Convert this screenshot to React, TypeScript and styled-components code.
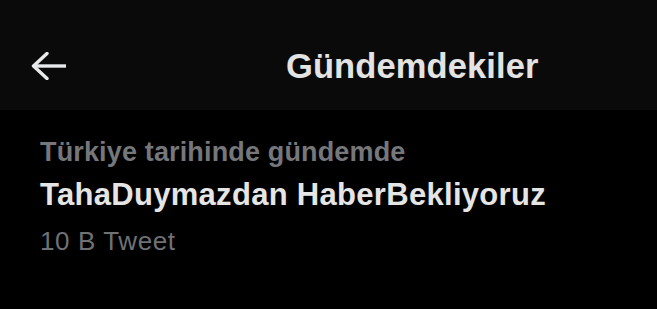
import React from "react";
import styled, { createGlobalStyle } from "styled-components";

const Global = createGlobalStyle`
  html, body { margin: 0; padding: 0; background: #000; }
  body { font-family: "Liberation Sans", Arial, sans-serif; }
  #root { width: 657px; height: 309px; background: #000; overflow: hidden; }
`;

const Header = styled.header`
  height: 110px;
  box-sizing: border-box;
  padding: 46px 0 0 31px;
  background: #0a0a0a;
  display: flex;
  align-items: flex-start;
`;

const BackButton = styled.div`
  width: 36px;
  height: 40px;
  display: flex;
  align-items: center;
  color: #e7e9ea;
`;

const Title = styled.h1`
  margin: 0 0 0 219px;
  font-size: 34.5px;
  line-height: 40px;
  font-weight: 700;
  letter-spacing: 0.1px;
  color: #e3e3e3;
`;

const Trend = styled.section`
  padding: 25px 0 0 40px;
  display: flex;
  flex-direction: column;
`;

const Context = styled.div`
  font-size: 27px;
  line-height: 34px;
  font-weight: 700;
  letter-spacing: 0.15px;
  color: #75777b;
`;

const Name = styled.div`
  margin-top: 4px;
  font-size: 31px;
  line-height: 44px;
  font-weight: 700;
  letter-spacing: 0.3px;
  color: #e5e5e5;
`;

const Count = styled.div`
  margin-top: 8px;
  font-size: 26px;
  line-height: 32px;
  letter-spacing: 0.6px;
  color: #6f7175;
`;

export default function App() {
  return (
    <>
      <Global />
      <Header>
        <BackButton>
          <svg width="36" height="28" viewBox="0 0 36 28" fill="none">
            <path d="M3 14H35" stroke="currentColor" strokeWidth="3.4" />
            <path d="M16 1.5L2.5 14L16 26.5" stroke="currentColor" strokeWidth="3.4" strokeLinecap="round" strokeLinejoin="round" />
          </svg>
        </BackButton>
        <Title>Gündemdekiler</Title>
      </Header>
      <Trend>
        <Context>Türkiye tarihinde gündemde</Context>
        <Name>TahaDuymazdan HaberBekliyoruz</Name>
        <Count>10 B Tweet</Count>
      </Trend>
    </>
  );
}
